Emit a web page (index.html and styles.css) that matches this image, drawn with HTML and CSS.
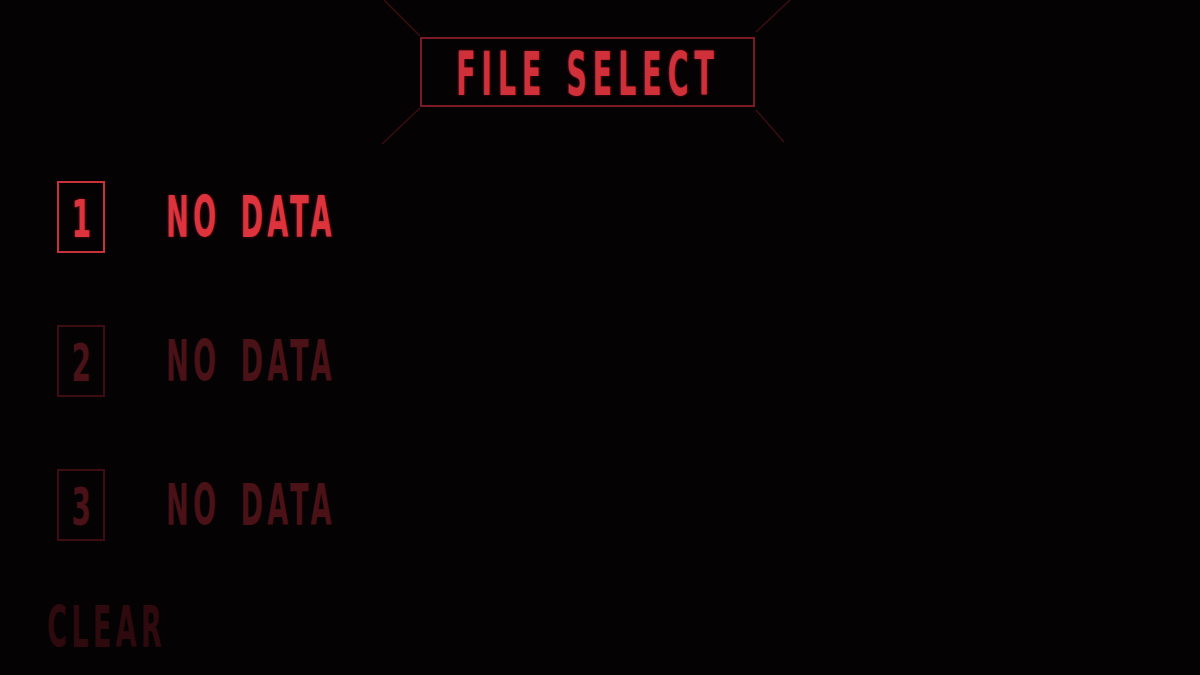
FILE: index.html
```html
<!DOCTYPE html>
<html>
<head>
<meta charset="utf-8">
<link rel="stylesheet" href="styles.css">
</head>
<body>
<div class="screen">
  <header class="header">
    <svg class="rays" width="420" height="145" viewBox="0 0 420 145">
      <line x1="38" y1="36" x2="2" y2="0"/>
      <line x1="38" y1="108" x2="0" y2="144"/>
      <line x1="374" y1="32" x2="408" y2="0"/>
      <line x1="374" y1="110" x2="402" y2="142"/>
    </svg>
    <div class="title-box"><span class="title">FILE SELECT</span></div>
  </header>
  <main class="slots">
    <div class="slot active">
      <div class="slot-num"><span class="digit">1</span></div>
      <span class="slot-label">NO DATA</span>
    </div>
    <div class="slot">
      <div class="slot-num"><span class="digit">2</span></div>
      <span class="slot-label">NO DATA</span>
    </div>
    <div class="slot">
      <div class="slot-num"><span class="digit">3</span></div>
      <span class="slot-label">NO DATA</span>
    </div>
  </main>
  <div class="clear"><span class="clear-label">CLEAR</span></div>
</div>
</body>
</html>
```
FILE: styles.css
```css
html, body {
  margin: 0;
  padding: 0;
  background: #050203;
}
body {
  width: 1200px;
  height: 675px;
  overflow: hidden;
  font-family: "DejaVu Sans Condensed", "Liberation Sans", sans-serif;
}
.screen {
  display: flex;
  flex-direction: column;
  height: 675px;
}
.header {
  position: relative;
  padding-top: 37px;
  padding-left: 420px;
}
.rays {
  position: absolute;
  left: 382px;
  top: 0;
}
.rays line {
  stroke: #3a0d12;
  stroke-width: 1.5;
}
.title-box {
  width: 331px;
  height: 66px;
  border: 2px solid #7c1a24;
  display: flex;
  align-items: center;
  justify-content: center;
}
.title {
  display: inline-block;
  white-space: nowrap;
  color: #d0303a;
  font-size: 60px;
  font-weight: bold;
  line-height: 1;
  letter-spacing: 11px;
  word-spacing: 6px;
  transform: scaleX(0.53);
  text-shadow: 0 0 4px rgba(220, 40, 50, 0.45);
  margin-top: 3px;
}
.slots {
  display: flex;
  flex-direction: column;
  gap: 72px;
  padding-top: 74px;
  padding-left: 57px;
}
.slot {
  display: flex;
  align-items: center;
  height: 72px;
}
.slot-num {
  width: 44px;
  height: 68px;
  border: 2px solid #3c0e13;
  display: flex;
  align-items: center;
  justify-content: center;
}
.digit {
  display: inline-block;
  color: #4a1116;
  font-size: 52px;
  font-weight: bold;
  line-height: 1;
  transform: scaleX(0.6);
  margin-top: 4px;
}
.slot-label {
  display: inline-block;
  white-space: nowrap;
  margin-left: 61px;
  color: #4a1116;
  font-size: 57px;
  font-weight: bold;
  line-height: 1;
  letter-spacing: 8px;
  word-spacing: 12px;
  transform: scaleX(0.53);
  transform-origin: left center;
}
.slot.active .slot-num {
  border-color: #c8303a;
}
.slot.active .digit,
.slot.active .slot-label {
  color: #dc333c;
  text-shadow: 0 0 4px rgba(230, 40, 50, 0.45);
}
.clear {
  padding-top: 58px;
  padding-left: 47px;
}
.clear-label {
  display: inline-block;
  color: #2e0a0e;
  font-size: 57px;
  font-weight: bold;
  line-height: 1;
  letter-spacing: 8px;
  transform: scaleX(0.53);
  transform-origin: left center;
}
```
